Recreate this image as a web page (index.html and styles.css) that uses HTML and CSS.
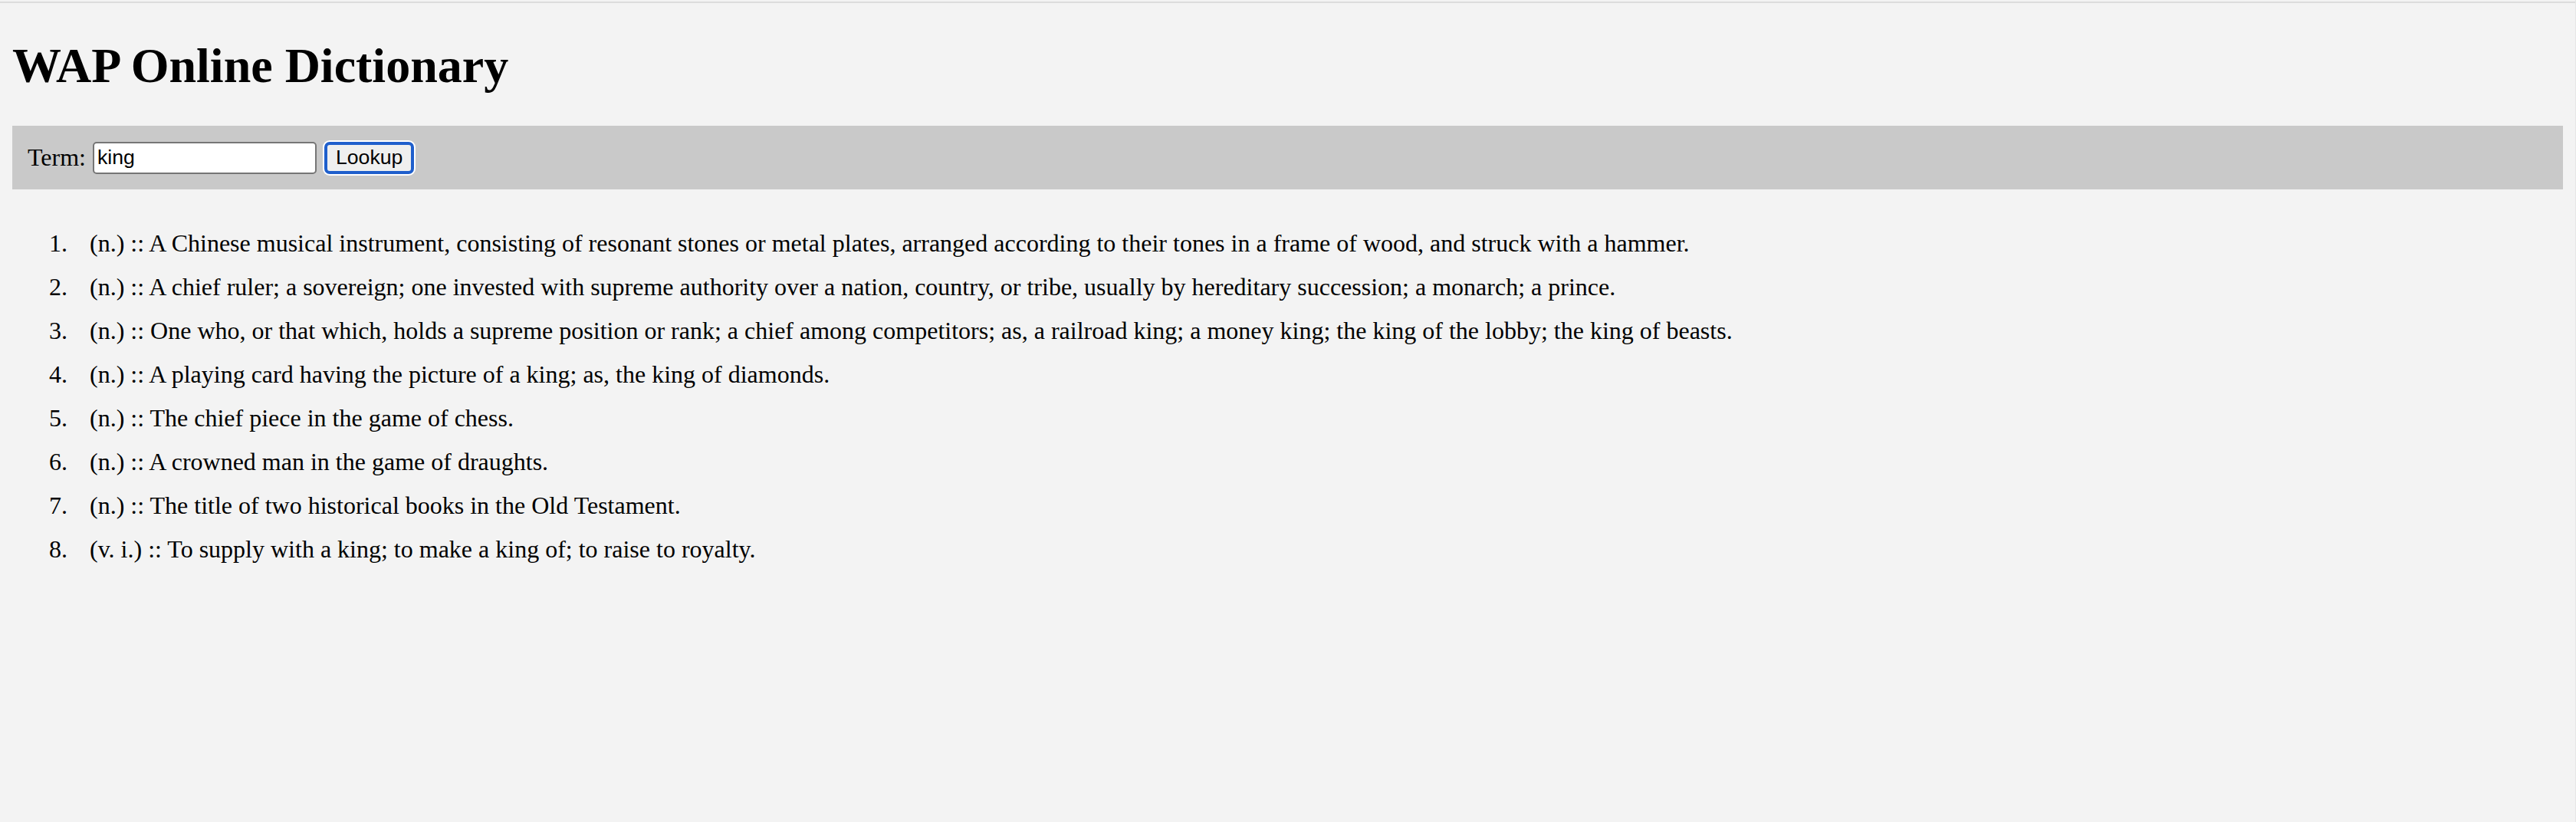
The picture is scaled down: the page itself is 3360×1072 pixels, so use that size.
FILE: index.html
```html
<!DOCTYPE html>
<html lang="en">
<head>
<meta charset="utf-8">
<title>WAP Online Dictionary</title>
<link rel="stylesheet" href="styles.css">
</head>
<body>
<div class="topline"></div>
<main class="page">
  <h1 class="title">WAP Online Dictionary</h1>
  <form class="searchbar">
    <label class="term-label" for="term">Term:</label>
    <input class="term-input" id="term" type="text" value="king">
    <button class="lookup-btn" type="button">Lookup</button>
  </form>
  <ol class="results">
    <li>(n.) :: A Chinese musical instrument, consisting of resonant stones or metal plates, arranged according to their tones in a frame of wood, and struck with a hammer.</li>
    <li>(n.) :: A chief ruler; a sovereign; one invested with supreme authority over a nation, country, or tribe, usually by hereditary succession; a monarch; a prince.</li>
    <li>(n.) :: One who, or that which, holds a supreme position or rank; a chief among competitors; as, a railroad king; a money king; the king of the lobby; the king of beasts.</li>
    <li>(n.) :: A playing card having the picture of a king; as, the king of diamonds.</li>
    <li>(n.) :: The chief piece in the game of chess.</li>
    <li>(n.) :: A crowned man in the game of draughts.</li>
    <li>(n.) :: The title of two historical books in the Old Testament.</li>
    <li>(v. i.) :: To supply with a king; to make a king of; to raise to royalty.</li>
  </ol>
</main>
</body>
</html>
```

FILE: styles.css
```css
html, body {
  margin: 0;
  padding: 0;
}
body {
  background: #f3f3f3;
  color: #000;
  font-family: "Liberation Serif", "Times New Roman", serif;
  font-size: 32px;
  min-height: 1072px;
  border-right: 1px solid #e6e6e6;
  box-sizing: border-box;
}
.topline {
  margin-top: 2px;
  height: 2px;
  background: #dcdcdc;
}
.page {
  padding: 0 16px;
}
.title {
  font-size: 64px;
  font-weight: bold;
  line-height: 74px;
  margin: 45px 0 41px 0;
}
.searchbar {
  display: flex;
  align-items: center;
  height: 83px;
  background: #c9c9c9;
  padding: 0 20px;
  margin: 0;
}
.term-label {
  font-size: 32px;
  margin-right: 9px;
}
.term-input {
  box-sizing: border-box;
  width: 292px;
  height: 42px;
  border: 2px solid #767676;
  border-radius: 5px;
  background: #fff;
  font-family: "Liberation Sans", Arial, sans-serif;
  font-size: 26.67px;
  padding: 0 4px;
  margin: 0;
  color: #000;
}
.lookup-btn {
  box-sizing: border-box;
  height: 42px;
  margin: 0 0 0 10px;
  padding: 0 11px;
  border: 4px solid #1f5fcc;
  border-radius: 7px;
  box-shadow: 0 0 0 2px #ffffff;
  background: #efefef;
  font-family: "Liberation Sans", Arial, sans-serif;
  font-size: 26.67px;
  color: #000;
}
.results {
  margin: 42px 0 0 0;
  padding-left: 80px;
}
.results li {
  line-height: 57px;
  padding-left: 21px;
}
```
